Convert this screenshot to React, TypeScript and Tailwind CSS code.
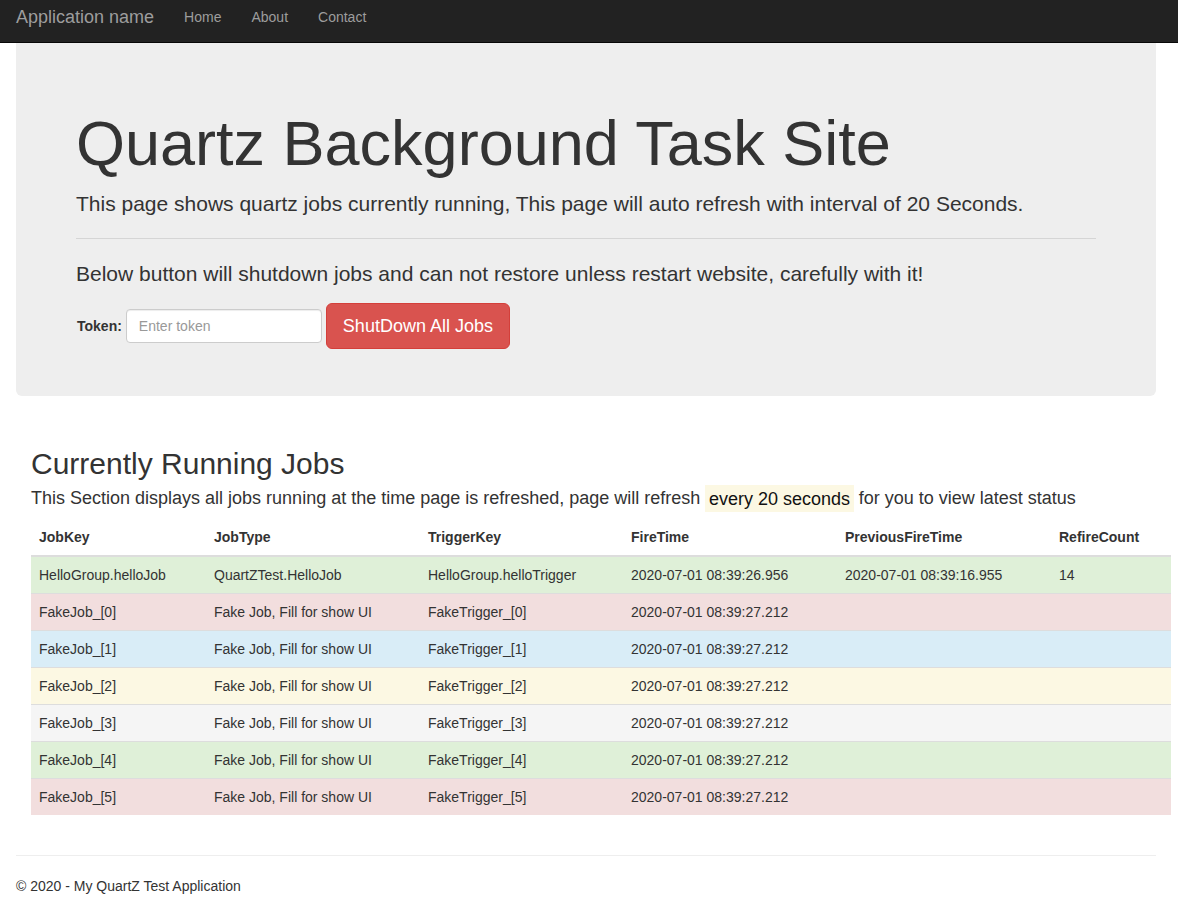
import React from "react";

const rows = [
  { k: "HelloGroup.helloJob", t: "QuartZTest.HelloJob", tr: "HelloGroup.helloTrigger", f: "2020-07-01 08:39:26.956", p: "2020-07-01 08:39:16.955", r: "14", bg: "bg-[#dff0d8]" },
  { k: "FakeJob_[0]", t: "Fake Job, Fill for show UI", tr: "FakeTrigger_[0]", f: "2020-07-01 08:39:27.212", p: "", r: "", bg: "bg-[#f2dede]" },
  { k: "FakeJob_[1]", t: "Fake Job, Fill for show UI", tr: "FakeTrigger_[1]", f: "2020-07-01 08:39:27.212", p: "", r: "", bg: "bg-[#d9edf7]" },
  { k: "FakeJob_[2]", t: "Fake Job, Fill for show UI", tr: "FakeTrigger_[2]", f: "2020-07-01 08:39:27.212", p: "", r: "", bg: "bg-[#fcf8e3]" },
  { k: "FakeJob_[3]", t: "Fake Job, Fill for show UI", tr: "FakeTrigger_[3]", f: "2020-07-01 08:39:27.212", p: "", r: "", bg: "bg-[#f5f5f5]" },
  { k: "FakeJob_[4]", t: "Fake Job, Fill for show UI", tr: "FakeTrigger_[4]", f: "2020-07-01 08:39:27.212", p: "", r: "", bg: "bg-[#dff0d8]" },
  { k: "FakeJob_[5]", t: "Fake Job, Fill for show UI", tr: "FakeTrigger_[5]", f: "2020-07-01 08:39:27.212", p: "", r: "", bg: "bg-[#f2dede]" },
];

export default function App() {
  const td = "px-2 py-2 leading-5 border-t border-[#ddd] whitespace-nowrap";
  const th = "px-2 py-2 leading-5 text-left font-bold border-b-2 border-[#ddd] whitespace-nowrap";
  return (
    <div className="min-h-[916px] bg-white text-[#333] text-[14px] leading-5 font-['Liberation_Sans',Arial,sans-serif]">
      <nav className="h-[43px] bg-[#222] border-b border-[#080808] flex items-start pt-[7px] px-[16px]">
        <span className="text-[18px] leading-5 text-[#9d9d9d] pr-[15px]">Application name</span>
        <span className="px-[15px] leading-5 text-[#9d9d9d]">Home</span>
        <span className="px-[15px] leading-5 text-[#9d9d9d]">About</span>
        <span className="px-[15px] leading-5 text-[#9d9d9d]">Contact</span>
      </nav>
      <div className="w-[1140px] ml-[16px]">
        <div className="bg-[#eee] rounded-b-[6px] px-[60px] pt-[66px] pb-[47px]">
          <h1 className="text-[63px] leading-[1.1] text-[#333] mb-[11px]">Quartz Background Task Site</h1>
          <p className="text-[21px] leading-[30px]">This page shows quartz jobs currently running, This page will auto refresh with interval of 20 Seconds.</p>
          <hr className="mt-[19px] mb-[20px] border-t border-[#d5d5d5]" />
          <p className="text-[21px] leading-[30px] mb-[14px]">Below button will shutdown jobs and can not restore unless restart website, carefully with it!</p>
          <div className="flex items-center">
            <label className="font-bold mr-[4px] ml-[1px]">Token:</label>
            <input
              placeholder="Enter token"
              className="w-[196px] h-[34px] px-[12px] border border-[#ccc] rounded-[4px] bg-white text-[14px] placeholder:text-[#999] outline-none shadow-[inset_0_1px_1px_rgba(0,0,0,0.075)]"
            />
            <button className="ml-[4px] h-[46px] px-[16px] text-[18px] text-white bg-[#d9534f] border border-[#d43f3a] rounded-[6px]">ShutDown All Jobs</button>
          </div>
        </div>
        <div className="pt-[30px] pl-[15px]">
          <h2 className="text-[30px] leading-[33px] mt-[21px] mb-[5px]">Currently Running Jobs</h2>
          <p className="text-[18px] leading-[26px] mb-[8px] whitespace-nowrap">
            This Section displays all jobs running at the time page is refreshed, page will refresh{" "}
            <mark className="bg-[#fcf8e3] text-[#111] px-[3.6px] py-[3.6px]">every 20 seconds</mark>{" "}
            for you to view latest status
          </p>
          <table className="w-[1140px] table-fixed border-collapse mb-[20px]">
            <colgroup>
              <col className="w-[175px]" />
              <col className="w-[214px]" />
              <col className="w-[203px]" />
              <col className="w-[214px]" />
              <col className="w-[214px]" />
              <col className="w-[120px]" />
            </colgroup>
            <thead>
              <tr>
                <th className={th}>JobKey</th>
                <th className={th}>JobType</th>
                <th className={th}>TriggerKey</th>
                <th className={th}>FireTime</th>
                <th className={th}>PreviousFireTime</th>
                <th className={th}>RefireCount</th>
              </tr>
            </thead>
            <tbody>
              {rows.map((r, i) => (
                <tr key={i} className={r.bg}>
                  <td className={td}>{r.k}</td>
                  <td className={td}>{r.t}</td>
                  <td className={td}>{r.tr}</td>
                  <td className={td}>{r.f}</td>
                  <td className={td}>{r.p}</td>
                  <td className={td}>{r.r}</td>
                </tr>
              ))}
            </tbody>
          </table>
        </div>
        <hr className="mt-[40px] mb-[20px] border-t border-[#eee]" />
        <footer className="pb-[20px]">© 2020 - My QuartZ Test Application</footer>
      </div>
    </div>
  );
}
